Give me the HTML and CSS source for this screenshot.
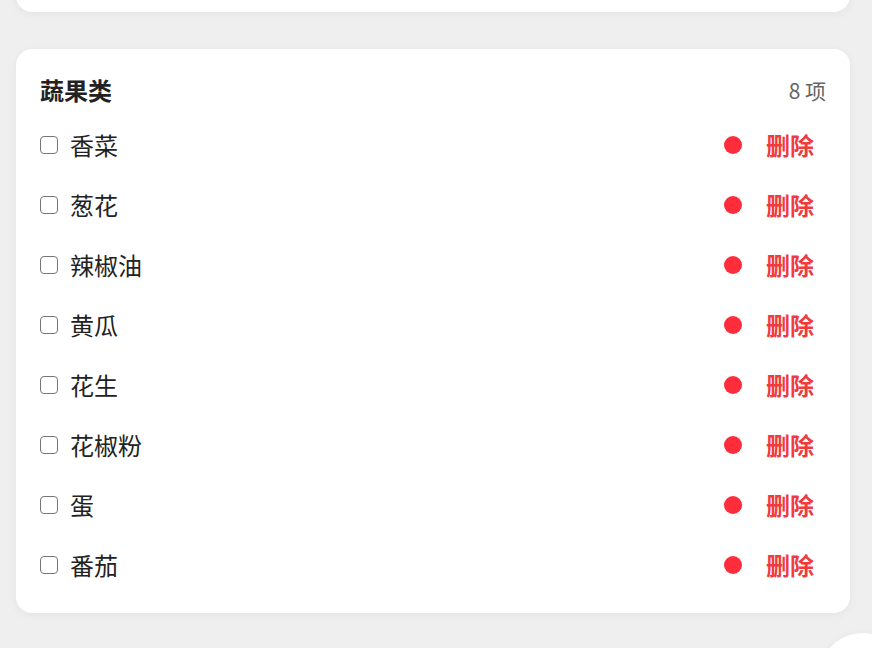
FILE: index.html
```html
<!DOCTYPE html>
<html lang="zh-CN">
<head>
<meta charset="utf-8">
<title>清单</title>
<link rel="stylesheet" href="styles.css">
</head>
<body>
<div class="page">
  <div class="card card-prev"></div>
  <section class="card">
    <header class="card-head">
      <h2 class="title">蔬果类</h2>
      <span class="count">8 项</span>
    </header>
    <ul class="list">
      <li class="row"><span class="check"></span><span class="name">香菜</span><span class="dot"></span><button class="del">删除</button></li>
      <li class="row"><span class="check"></span><span class="name">葱花</span><span class="dot"></span><button class="del">删除</button></li>
      <li class="row"><span class="check"></span><span class="name">辣椒油</span><span class="dot"></span><button class="del">删除</button></li>
      <li class="row"><span class="check"></span><span class="name">黄瓜</span><span class="dot"></span><button class="del">删除</button></li>
      <li class="row"><span class="check"></span><span class="name">花生</span><span class="dot"></span><button class="del">删除</button></li>
      <li class="row"><span class="check"></span><span class="name">花椒粉</span><span class="dot"></span><button class="del">删除</button></li>
      <li class="row"><span class="check"></span><span class="name">蛋</span><span class="dot"></span><button class="del">删除</button></li>
      <li class="row"><span class="check"></span><span class="name">番茄</span><span class="dot"></span><button class="del">删除</button></li>
    </ul>
  </section>
  <div class="fab"></div>
</div>
</body>
</html>
```
FILE: styles.css
```css
* { box-sizing: border-box; }
html, body { margin: 0; padding: 0; }
body {
  background: #efefef;
  font-family: "Noto Sans CJK SC", "Noto Sans", sans-serif;
  color: #222;
  width: 872px;
  height: 648px;
  overflow: hidden;
}
.page {
  position: relative;
  height: 648px;
  padding: 0 22px 0 16px;
  display: flex;
  flex-direction: column;
  gap: 37px;
}
.card {
  background: #fff;
  border-radius: 16px;
  box-shadow: 0 2px 10px rgba(0, 0, 0, 0.05);
}
.card-prev {
  height: 40px;
  margin-top: -28px;
}
.card-head {
  display: flex;
  justify-content: space-between;
  align-items: center;
  height: 36px;
  padding: 0 24px;
  margin-top: 23px;
}
.title {
  margin: 0;
  font-size: 24px;
  font-weight: 700;
  color: #222;
  line-height: 36px;
}
.count {
  font-size: 21px;
  color: #666;
  line-height: 36px;
}
.list {
  list-style: none;
  margin: 7px 0 0;
  padding: 0 24px 18px;
}
.row {
  display: flex;
  align-items: center;
  height: 60px;
}
.check {
  width: 18px;
  height: 18px;
  border: 1.5px solid #767676;
  border-radius: 4px;
  flex: none;
}
.name {
  flex: 1;
  margin-left: 12px;
  font-size: 24px;
  color: #222;
  line-height: 32px;
  margin-top: -1px;
}
.dot {
  width: 18px;
  height: 18px;
  border-radius: 50%;
  background: #ff2d3b;
  flex: none;
}
.del {
  margin-left: 12px;
  padding: 0 12px;
  border: none;
  background: none;
  font-family: inherit;
  font-size: 24px;
  font-weight: 700;
  color: #f03a3e;
  line-height: 32px;
  margin-top: -1px;
}
.fab {
  position: absolute;
  left: 819px;
  top: 633px;
  width: 88px;
  height: 88px;
  border-radius: 50%;
  background: #fff;
  box-shadow: 0 2px 10px rgba(0, 0, 0, 0.06);
}
```
